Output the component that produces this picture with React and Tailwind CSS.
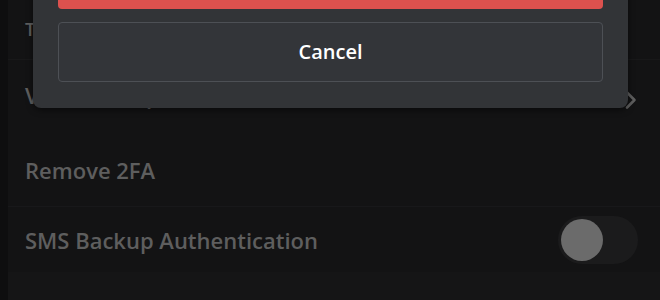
import React from "react";

function Chevron() {
  return (
    <svg width="14" height="20" viewBox="0 0 14 20" fill="none">
      <path d="M3 2.5l7.5 7.5-7.5 7.5" stroke="#5e5e5e" strokeWidth="2.6" strokeLinecap="round" strokeLinejoin="round" />
    </svg>
  );
}

export default function App() {
  return (
    <div className="relative w-[660px] h-[300px] overflow-hidden bg-[#0e0e0f] font-['Open_Sans',sans-serif]">
      <div className="ml-2 flex flex-col bg-[#131314] h-full">
        <div className="h-[60px] flex items-center pl-[17px] border-b border-[#181819]">
          <span className="text-[18px] font-semibold text-[#5e5e5e] tracking-wide">TWO-FACTOR AUTH</span>
        </div>
        <div className="h-[80px] flex items-center justify-between pl-[17px] pr-[22px]">
          <span className="text-[22px] font-semibold text-[#5e5e5e] mb-[10px]">View Backup Codes</span>
          <Chevron />
        </div>
        <div className="h-[67px] flex items-center pl-[17px] pb-[6px] border-b border-[#18181a]">
          <span className="text-[22px] font-semibold text-[#5e5e5e]">Remove 2FA</span>
        </div>
        <div className="h-[65px] flex items-center justify-between pl-[17px] pr-[22px]">
          <span className="text-[22px] font-semibold text-[#5e5e5e] pt-[2px]">SMS Backup Authentication</span>
          <div className="w-[80px] h-[48px] rounded-full bg-[#1b1b1c] flex items-center pl-[3px]">
            <div className="w-[42px] h-[42px] rounded-full bg-[#6b6b6b]" />
          </div>
        </div>
        <div className="flex-1 bg-[#151516]" />
      </div>

      <div className="absolute left-[33px] top-[-60px] w-[595px] rounded-lg bg-[#323437] px-[25px] pt-[21px] pb-[26px] shadow-[0_2px_6px_rgba(0,0,0,0.5)]">
        <div className="h-[48px] rounded bg-[#dc514e]" />
        <div className="mt-[13px] h-[60px] rounded border border-[#4d5055] bg-[#333539] flex items-center justify-center">
          <span className="text-[20px] font-semibold text-white">Cancel</span>
        </div>
      </div>
    </div>
  );
}
